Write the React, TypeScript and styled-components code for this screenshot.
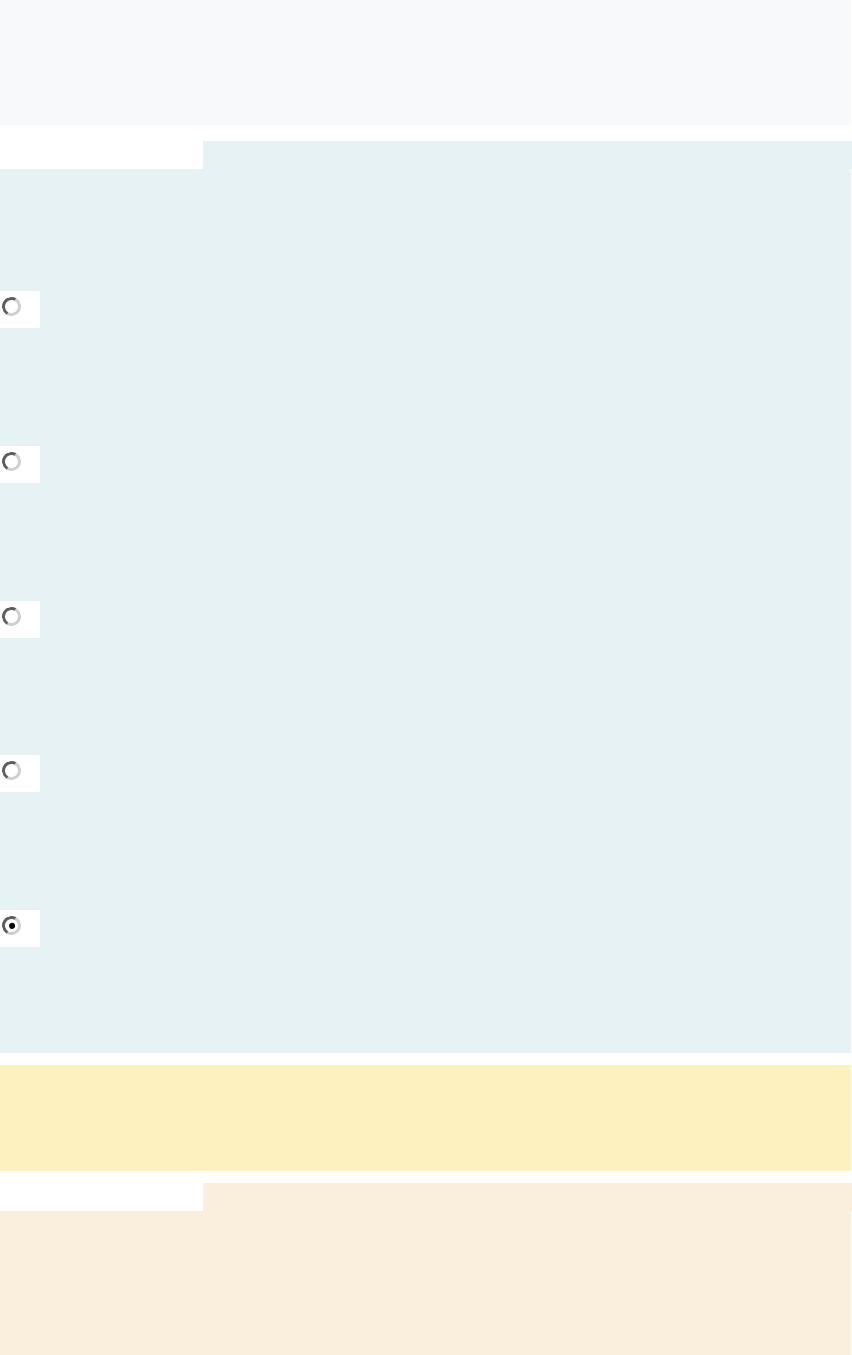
import React from "react";
import styled, { createGlobalStyle } from "styled-components";

const Global = createGlobalStyle`
  html, body { margin: 0; padding: 0; background: #ffffff; overflow-x: hidden; }
  body { font-family: "Liberation Sans", Arial, sans-serif; }
`;

const Page = styled.div`
  width: 852px;
  display: flex;
  flex-direction: column;
`;

const Header = styled.header`
  width: 851px;
  height: 125px;
  background: #f7f9fa;
`;

const Section = styled.section<{ $gap: number }>`
  margin-top: ${(p) => p.$gap}px;
  display: flex;
  flex-direction: column;
`;

const Tab = styled.div<{ $bg: string }>`
  margin-left: 203px;
  width: 649px;
  height: 28px;
  background: ${(p) => p.$bg};
`;

const Body = styled.div<{ $bg: string; $h?: number }>`
  width: 851px;
  background: ${(p) => p.$bg};
  ${(p) => (p.$h ? `height: ${p.$h}px;` : "")}
`;

const Options = styled(Body)`
  padding: 122px 0 106px;
  display: flex;
  flex-direction: column;
  gap: 117.75px;
`;

const OptionBox = styled.label`
  width: 40px;
  height: 37px;
  background: #ffffff;
  display: flex;
  align-items: flex-start;
  padding-top: 6px;
  box-sizing: border-box;
`;

const Radio = styled.input`
  appearance: none;
  -webkit-appearance: none;
  box-sizing: border-box;
  width: 19px;
  height: 19px;
  margin: 0 0 0 2px;
  border-radius: 50%;
  border: 3px solid;
  border-color: #5e5e5e #cfcfcf #cfcfcf #5e5e5e;
  transform: rotate(-15deg);
  background: #ffffff;
  display: grid;
  place-items: center;
  &::after {
    content: "";
    width: 6px;
    height: 6px;
    border-radius: 50%;
    background: transparent;
  }
  &:checked::after {
    background: #000000;
  }
`;

const Notice = styled.div`
  margin-top: 12px;
  width: 851px;
  height: 106px;
  background: #fef1c0;
`;

export default function App() {
  const options = [0, 1, 2, 3, 4];
  return (
    <>
      <Global />
      <Page>
        <Header />
        <Section $gap={16}>
          <Tab $bg="#e6f2f4" />
          <Options $bg="#e6f2f4">
            {options.map((i) => (
              <OptionBox key={i}>
                <Radio type="radio" name="q" defaultChecked={i === 4} />
              </OptionBox>
            ))}
          </Options>
        </Section>
        <Notice />
        <Section $gap={12}>
          <Tab $bg="#faeedd" />
          <Body $bg="#faeedd" $h={160} />
        </Section>
      </Page>
    </>
  );
}
